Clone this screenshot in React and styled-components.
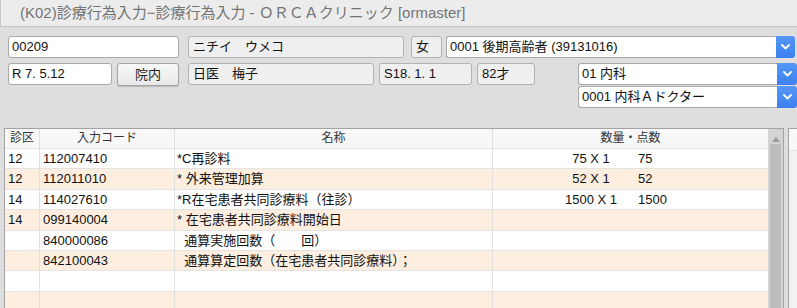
import React from "react";
import styled, { createGlobalStyle } from "styled-components";

const Global = createGlobalStyle`
  html, body { margin: 0; padding: 0; }
  body {
    width: 797px; height: 308px; overflow: hidden;
    background: #dedede;
    font-family: "Liberation Sans", "Noto Sans CJK JP", sans-serif;
    font-size: 13px; color: #111;
  }
  * { box-sizing: border-box; }
`;

const Page = styled.div`
  width: 797px; height: 308px; overflow: hidden;
  display: flex; flex-direction: column;
`;

const TitleBar = styled.div`
  height: 27px; flex: none;
  background: #ececec;
  border-left: 1px solid #c6c6c6;
  border-bottom: 1px solid #c4c4c4;
  padding-left: 19px;
  line-height: 26px;
  font-size: 15px; color: #747474;
  white-space: nowrap;
`;

const Form = styled.div`
  padding: 9px 0 0 8px;
  display: flex; flex-direction: column;
`;

const Row = styled.div`
  display: flex; align-items: center;
  height: 22px;
  margin-top: ${(p) => p.mt || 0}px;
  justify-content: ${(p) => (p.end ? "flex-end" : "flex-start")};
`;

const Field = styled.div`
  flex: none;
  width: ${(p) => p.w}px; height: 22px;
  margin-left: ${(p) => p.ml || 0}px;
  border: 1px solid ${(p) => (p.ro ? "#b2b2b2" : "#a9a9a9")};
  border-radius: 3px;
  background: ${(p) => (p.ro ? "#efefef" : "#ffffff")};
  padding-left: ${(p) => (p.ro ? 4 : 3)}px;
  line-height: 20px; white-space: nowrap; overflow: hidden;
`;

const Button = styled.div`
  flex: none;
  width: ${(p) => p.w}px; height: 23px;
  margin-left: ${(p) => p.ml || 0}px;
  border: 1px solid #a4a4a4; border-radius: 3px;
  background: linear-gradient(#f8f8f8, #e8e8e8);
  box-shadow: 0 1px 1px rgba(0,0,0,0.18);
  text-align: center; line-height: 21px; color: #222;
`;

const Select = styled.div`
  flex: none; display: flex;
  width: ${(p) => p.w}px; height: 22px;
  margin-left: ${(p) => p.ml || 0}px;
`;

const SelectText = styled.div`
  flex: 1;
  border: 1px solid #a9a9a9; border-right: none;
  border-radius: 3px 0 0 3px;
  background: #fff;
  padding-left: 3px; line-height: 20px; white-space: nowrap; overflow: hidden;
`;

const SelectBtn = styled.div`
  flex: none; width: ${(p) => p.bw || 19}px;
  background: linear-gradient(#5597f6, #3c80ef);
  border-radius: 0 3px 3px 0;
  display: flex; align-items: center; justify-content: center;
`;

const Chevron = () => (
  <svg width="9" height="6" viewBox="0 0 9 6">
    <polyline points="1,1 4.5,4.5 8,1" fill="none" stroke="#fff" strokeWidth="1.8" strokeLinecap="round" strokeLinejoin="round" />
  </svg>
);

const Lower = styled.div`
  display: flex; margin-top: 20px; padding-left: 4px; flex: 1; min-height: 0;
`;

const Table = styled.div`
  width: 780px; flex: none;
  border: 1px solid #a3a3a3; border-bottom: none;
  display: flex; background: #fff;
`;

const Grid = styled.div`
  width: 763px; flex: none; display: flex; flex-direction: column;
`;

const GridRow = styled.div`
  display: grid;
  grid-template-columns: 35px 135px 318px 275px;
  height: ${(p) => (p.head ? "20px" : "20.4px")};
  flex: none;
  background: ${(p) => (p.head ? "#f8f8f8" : p.alt ? "#fdeee0" : "#ffffff")};
  border-bottom: 1px solid #e3e3e3;
`;

const Cell = styled.div`
  border-right: ${(p) => (p.last ? "none" : "1px solid #e0e0e0")};
  padding-left: ${(p) => (p.head ? 0 : p.pl ?? 3)}px;
  text-align: ${(p) => (p.head ? "center" : "left")};
  font-size: ${(p) => (p.head ? 12 : 13)}px;
  color: ${(p) => (p.head ? "#333" : "#111")};
  line-height: 19px; white-space: pre; overflow: hidden;
  display: ${(p) => (p.qty ? "flex" : "block")};
`;

const Qty = styled.span`
  width: 90px; margin-left: 53px; text-align: center; flex: none;
`;
const Pts = styled.span`
  margin-left: 2px;
`;

const Scrollbar = styled.div`
  width: 15px; flex: none;
  background: #d4d4d4;
  display: flex; flex-direction: column; align-items: center;
`;

const Arrow = styled.div`
  width: 0; height: 0; margin-top: 8px;
  border-left: 4px solid transparent; border-right: 4px solid transparent;
  border-bottom: 5px solid #9c9c9c;
`;

const Thumb = styled.div`
  width: 11px; margin-top: 2px; flex: 1;
  background: #bdbdbd;
`;

const SidePanel = styled.div`
  margin-left: 4px; flex: 1;
  border-left: 1px solid #a3a3a3; border-top: 1px solid #a3a3a3;
  background: #f2f2f2;
`;

const SideHead = styled.div`
  height: 22px; border-bottom: 1px solid #e2e2e2; background: #f8f8f8;
`;

const rows = [
  ["12", "112007410", "*C再診料", "75 X 1", "75"],
  ["12", "112011010", "* 外来管理加算", "52 X 1", "52"],
  ["14", "114027610", "*R在宅患者共同診療料（往診）", "1500 X 1", "1500"],
  ["14", "099140004", "* 在宅患者共同診療料開始日", "", ""],
  ["", "840000086", "  通算実施回数（　　回）", "", ""],
  ["", "842100043", "  通算算定回数（在宅患者共同診療料）；", "", ""],
  ["", "", "", "", ""],
  ["", "", "", "", ""],
  ["", "", "", "", ""],
];

export default function App() {
  return (
    <Page>
      <Global />
      <TitleBar>(K02)診療行為入力−診療行為入力 - ＯＲＣＡクリニック [ormaster]</TitleBar>
      <Form>
        <Row>
          <Field w={171}>00209</Field>
          <Field ro w={216} ml={9}>ニチイ　ウメコ</Field>
          <Field ro w={31} ml={7}>女</Field>
          <Select w={349} ml={4}>
            <SelectText>0001 後期高齢者 (39131016)</SelectText>
            <SelectBtn><Chevron /></SelectBtn>
          </Select>
        </Row>
        <Row mt={5}>
          <Field w={104}>R 7. 5.12</Field>
          <Button w={62} ml={5}>院内</Button>
          <Field ro w={186} ml={9}>日医　梅子</Field>
          <Field ro w={93} ml={5}>S18. 1. 1</Field>
          <Field ro w={58} ml={5}>82才</Field>
          <Select w={219} ml={43}>
            <SelectText>01 内科</SelectText>
            <SelectBtn bw={20}><Chevron /></SelectBtn>
          </Select>
        </Row>
        <Row mt={1} end>
          <Select w={219}>
            <SelectText>0001 内科Ａドクター</SelectText>
            <SelectBtn bw={20}><Chevron /></SelectBtn>
          </Select>
        </Row>
      </Form>
      <Lower>
        <Table>
          <Grid>
            <GridRow head>
              <Cell head>診区</Cell>
              <Cell head>入力コード</Cell>
              <Cell head>名称</Cell>
              <Cell head last>数量・点数</Cell>
            </GridRow>
            {rows.map((r, i) => (
              <GridRow key={i} alt={i % 2 === 1}>
                <Cell>{r[0]}</Cell>
                <Cell>{r[1]}</Cell>
                <Cell pl={2}>{r[2]}</Cell>
                <Cell last qty pl={0}>
                  <Qty>{r[3]}</Qty>
                  <Pts>{r[4]}</Pts>
                </Cell>
              </GridRow>
            ))}
          </Grid>
          <Scrollbar>
            <Arrow />
            <Thumb />
          </Scrollbar>
        </Table>
        <SidePanel>
          <SideHead />
        </SidePanel>
      </Lower>
    </Page>
  );
}
